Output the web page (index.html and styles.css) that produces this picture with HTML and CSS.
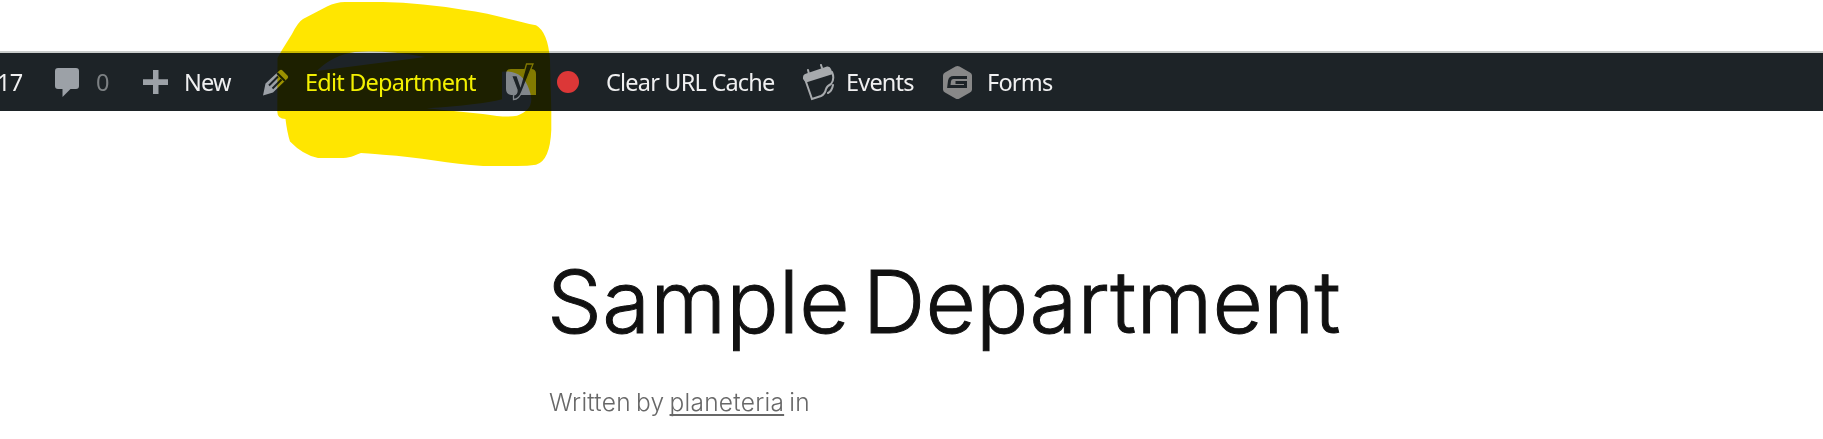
FILE: index.html
```html
<!DOCTYPE html>
<html lang="en">

<head>
    <meta charset="utf-8">
    <title>Sample Department</title>
    <link rel="stylesheet" href="styles.css">
</head>

<body>
    <nav class="adminbar">
        <div class="item updates">17</div>
        <div class="item comments">
            <svg class="icon" width="24" height="30" viewBox="0 0 24 30">
                <path d="M3 1h18q3 0 3 3v15q0 3-3 3h-5.500L7.500 30v-8H3q-3 0-3-3V4q0-3 3-3z" />
            </svg>
            <span class="label count">0</span>
        </div>
        <div class="item new">
            <svg class="icon" width="25" height="24" viewBox="0 0 25 24">
                <path d="M10 0h5.500v9.300H25V15h-9.500v9H10v-9H0V9.300h10z" />
            </svg>
            <span class="label">New</span>
        </div>
        <div class="item edit">
            <svg class="icon" width="27" height="27" viewBox="0 0 27 27">
                <path d="M17.500 1.500q1.500-1.500 3 0l5 5q1.500 1.500 0 3L11 23.500 1 26.500 3.500 14.500z" />
                <path class="cut" d="M15 4l8 8M7 16.500l9-9M10.500 19.500l9-9" />
            </svg>
            <span class="label">Edit Department</span>
        </div>
        <div class="item seo">
            <svg class="icon" width="32" height="38" viewBox="0 0 32 38">
                <path class="grey" d="M6 6h20q5 0 5 5v21H6q-5-1-5-6V11q0-5 5-5z" />
                <path class="letter" d="M21.500 1H28L17 28.500q-3 8-8.500 8v-4.500q4-1 3.500-5L6.500 12.500h5.500l3.500 10z" />
            </svg>
        </div>
        <div class="item status"><span class="dot"></span></div>
        <div class="item cache"><span class="label">Clear URL Cache</span></div>
        <div class="item events">
            <svg class="icon" width="32" height="37" viewBox="0 0 32 37">
                <path class="fill" d="M0 15V13q0-2 2-3L24 2.500q3-.5 4 2.500l2 5L3 18.500z" />
                <path class="line" d="M5 6l1 4M18 1l1 3M2 15l7 20 9-3q4-2 5-7 1-3 5-5 4-5 1-12M25 29q4-2 5-8" />
            </svg>
            <span class="label">Events</span>
        </div>
        <div class="item forms">
            <svg class="icon" width="29" height="33" viewBox="0 0 29 33">
                <path class="badge" d="M12.500.6q2-1 4 0L27 6.600q2 1 2 3v13.800q0 2-2 3l-10.500 6q-2 1-4 0L2 26.400q-2-1-2-3V9.600q0-2 2-3z" />
                <path class="glyph" d="M24 11.500H10.500Q7 11.500 6.500 15l-.7 5.500H22.500v-4H12.500" />
            </svg>
            <span class="label">Forms</span>
        </div>
    </nav>

    <main class="content">
        <h1>Sample Department</h1>
        <p class="meta">Written by <a href="#">planeteria</a> in</p>
    </main>

    <!-- highlighter stroke over the bar -->
    <svg class="marker" width="560" height="170" viewBox="0 0 560 170">
        <path fill-rule="evenodd" d="M277.500 58L282 50 292 34Q298 22 303 19L327 6.500Q336 2 345 2H383Q423 3 463 9.700C490 13 515 21 536 25.300Q548 32 550 60L551.300 110V130Q550 161 536 164.700 528 166 517 166H483C450 164 420 157 383 154.700Q365 153 361 153C353 156 350 158 340 158H318Q303 155 290 141.500 287 132 285.500 119 277 119 277.300 111zM316.700 71Q333 55 355 52 385 50 425 57zM426.700 108.300Q480 105 502 99.300V71.700Q522 69 529 89 537 109 517 115.700 507 118 483 114z" />
    </svg>
</body>

</html>
```
FILE: styles.css
```css
body {
    margin: 0;
    background-color: #fff;
    overflow: hidden;
}

.adminbar {
    display: grid;
    grid-template-columns: 55px 88px 119px 243px 52px 49px 197px 140px auto;
    height: 58px;
    margin-top: 51px;
    border-top: 2px solid #c9cccb;
    background-color: #1d2327;
    color: #f0f0f1;
    font-family: "Noto Sans", sans-serif;
    font-size: 23.5px;
    line-height: 58px;
    letter-spacing: -0.8px;
    white-space: nowrap;
}

.item {
    display: flex;
    align-items: center;
}

.icon {
    flex: none;
    fill: #9ca1a7;
}

.updates {
    text-indent: -3px;
}

.comments {
    gap: 17px;
}

.count {
    color: #7c8083;
}

.new,
.edit {
    gap: 16px;
}

/* keeps the text above the highlighter */
.edit .label {
    position: relative;
    z-index: 1;
    color: #f3f000;
}

.cut {
    fill: none;
    stroke: #1d2327;
    stroke-width: 2;
}

.seo .grey {
    fill: #82878c;
}

.letter {
    fill: #1d2327;
    stroke: #82878c;
    stroke-width: 1.3;
}

.dot {
    width: 22px;
    height: 22px;
    border-radius: 50%;
    background-color: #dc3737;
}

.events {
    gap: 11px;
}

.fill {
    fill: #a7aaad;
}

.line {
    fill: none;
    stroke: #a7aaad;
    stroke-width: 2;
    stroke-linecap: round;
}

.forms {
    gap: 15px;
}

.badge {
    fill: #888;
}

.glyph {
    fill: none;
    stroke: #1d2327;
    stroke-width: 3;
}

.content {
    padding: 138px 0 0 547px;
    font-family: Inter, sans-serif;
}

h1 {
    margin: 0;
    color: #111;
    font-size: 87px;
    font-weight: 300;
    letter-spacing: 0.2px;
    word-spacing: -12px;
    line-height: 106px;
    white-space: nowrap;
    -webkit-text-stroke: 1px #111;
}

.meta {
    margin: 30px 0 0 2px;
    color: #686868;
    font-size: 24.5px;
    font-weight: 300;
    letter-spacing: 0.25px;
    word-spacing: -2px;
    line-height: 34px;
}

.meta a {
    color: inherit;
    text-decoration-thickness: 2px;
    text-underline-offset: 3px;
    text-decoration-skip-ink: none;
}

.marker {
    position: absolute;
    top: 0;
    left: 0;
    fill: #ffe600;
    mix-blend-mode: multiply;
}
```
